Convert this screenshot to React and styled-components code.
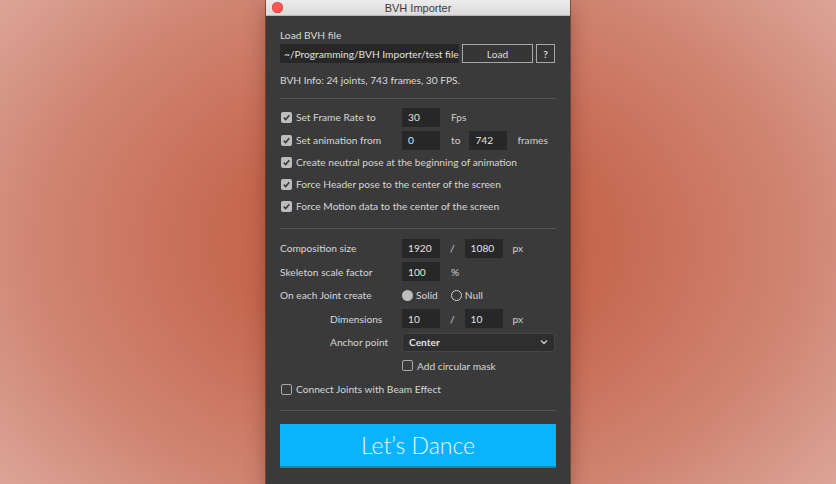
import React from 'react';
import styled, { createGlobalStyle } from 'styled-components';

const GlobalStyle = createGlobalStyle`
  html, body {
    margin: 0;
    padding: 0;
    height: 100%;
  }
  #root {
    height: 100%;
  }
`;

const Page = styled.div`
  width: 836px;
  height: 484px;
  overflow: hidden;
  display: flex;
  justify-content: center;
  background: radial-gradient(
    ellipse 80% 100% at 50% 50%,
    #c25e44 0%,
    #c66850 28%,
    #d08674 58%,
    #e6c1b6 100%
  );
`;

const Window = styled.div`
  width: 304px;
  height: 490px;
  display: flex;
  flex-direction: column;
  background: #3a3a3a;
  box-shadow: 0 0 0 1px rgba(40, 20, 15, 0.45), 0 6px 18px rgba(60, 20, 10, 0.35);
  font-family: Lato, 'Open Sans', sans-serif;
  font-size: 10.2px;
  color: #d6d6d6;
`;

const TitleBar = styled.div`
  height: 15px;
  flex: none;
  position: relative;
  display: flex;
  align-items: center;
  justify-content: center;
  background: linear-gradient(#ececec, #dadada);
  border-bottom: 1px solid #b9b9b9;
  font-family: 'Liberation Sans', Arial, sans-serif;
  font-size: 11px;
  color: #3a3a3a;
`;

const CloseDot = styled.span`
  position: absolute;
  left: 6px;
  top: 2px;
  width: 11px;
  height: 11px;
  border-radius: 50%;
  background: #fc5753;
  box-shadow: inset 0 0 0 0.5px #de3f3a;
`;

const Content = styled.div`
  padding: 0 14px;
  display: flex;
  flex-direction: column;
`;

const Label = styled.div`
  height: 16px;
  display: flex;
  align-items: center;
  margin-top: ${(p) => p.mt || 0}px;
  color: #d8d8d8;
`;

const FileRow = styled.div`
  display: flex;
  height: 19px;
  gap: 3px;
  margin-top: 1px;
`;

const PathField = styled.div`
  width: 179px;
  background: #272727;
  display: flex;
  align-items: center;
  padding-left: 4px;
  box-sizing: border-box;
  white-space: nowrap;
  overflow: hidden;
  color: #e0e0e0;
`;

const OutlineButton = styled.div`
  width: ${(p) => p.w}px;
  box-sizing: border-box;
  border: 1px solid #a7a7a7;
  background: #363636;
  display: flex;
  align-items: center;
  justify-content: center;
  color: #dcdcdc;
  font-weight: ${(p) => (p.bold ? 700 : 400)};
`;

const Divider = styled.hr`
  border: none;
  border-top: 1px solid #555;
  margin: ${(p) => p.mt}px 0 0;
  height: 0;
`;

const Section = styled.div`
  display: flex;
  flex-direction: column;
  margin-top: ${(p) => p.mt}px;
  gap: ${(p) => p.gap || 0}px;
`;

const Row = styled.div`
  height: ${(p) => p.h || 20}px;
  margin-top: ${(p) => p.mt || 0}px;
  display: grid;
  grid-template-columns: 122px 1fr;
  align-items: center;
`;

const RowLabel = styled.div`
  display: flex;
  align-items: center;
  gap: 4px;
  padding-left: ${(p) => (p.indent ? 50 : p.box ? 1 : 0)}px;
  white-space: nowrap;
`;

const Controls = styled.div`
  display: flex;
  align-items: center;
  gap: ${(p) => p.gap ?? 11}px;
`;

const NumField = styled.div`
  width: 38px;
  height: 19px;
  box-sizing: border-box;
  background: #272727;
  display: flex;
  align-items: center;
  padding-left: 6px;
  color: #e2e2e2;
`;

const Unit = styled.span`
  color: #cfcfcf;
  margin-left: ${(p) => p.ml || 0}px;
`;

const Box = styled.span`
  width: 11px;
  height: 11px;
  flex: none;
  box-sizing: border-box;
  border-radius: 2px;
  display: inline-flex;
  align-items: center;
  justify-content: center;
  background: ${(p) => (p.checked ? '#bdbdbd' : 'transparent')};
  border: ${(p) => (p.checked ? 'none' : '1.5px solid #a9a9a9')};
`;

const Check = ({ checked }) => (
  <Box checked={checked}>
    {checked && (
      <svg width="9" height="9" viewBox="0 0 9 9">
        <path d="M1.8 4.6 L3.7 6.5 L7.3 2.3" fill="none" stroke="#3a3a3a" strokeWidth="1.6" />
      </svg>
    )}
  </Box>
);

const Radio = styled.span`
  width: 11px;
  height: 11px;
  box-sizing: border-box;
  border-radius: 50%;
  background: ${(p) => (p.on ? '#bdbdbd' : 'transparent')};
  border: ${(p) => (p.on ? 'none' : '1.5px solid #cfcfcf')};
`;

const RadioOption = styled.span`
  display: flex;
  align-items: center;
  gap: 3px;
  margin-right: ${(p) => p.mr || 0}px;
`;

const Select = styled.div`
  width: 153px;
  height: 19px;
  box-sizing: border-box;
  background: #2e2e2e;
  border: 1px solid #444;
  border-radius: 2px;
  display: flex;
  align-items: center;
  justify-content: space-between;
  padding: 0 6px;
  font-weight: 700;
  color: #e0e0e0;
`;

const DanceButton = styled.div`
  margin-top: 13px;
  height: 42px;
  background: #0ab4fd;
  border-bottom: 2px solid #0a86c0;
  display: flex;
  align-items: center;
  justify-content: center;
  font-family: Lato, 'Open Sans', sans-serif;
  font-weight: 300;
  font-size: 23px;
  color: #eaf8ff;
`;

const Chevron = () => (
  <svg width="8" height="6" viewBox="0 0 8 6">
    <path d="M1 1.5 L4 4.5 L7 1.5" fill="none" stroke="#cfcfcf" strokeWidth="1.3" />
  </svg>
);

export default function App() {
  return (
    <>
      <GlobalStyle />
      <Page>
        <Window>
          <TitleBar>
            <CloseDot />
            BVH Importer
          </TitleBar>
          <Content>
            <Label mt={11}>Load BVH file</Label>
            <FileRow>
              <PathField>~/Programming/BVH Importer/test file</PathField>
              <OutlineButton w={71}>Load</OutlineButton>
              <OutlineButton w={19} bold>?</OutlineButton>
            </FileRow>
            <Label mt={9}>BVH Info: 24 joints, 743 frames, 30 FPS.</Label>
            <Divider mt={10} />

            <Section mt={8}>
              <Row h={20}>
                <RowLabel box><Check checked />Set Frame Rate to</RowLabel>
                <Controls>
                  <NumField>30</NumField>
                  <Unit>Fps</Unit>
                </Controls>
              </Row>
              <Row h={20} mt={3}>
                <RowLabel box><Check checked />Set animation from</RowLabel>
                <Controls gap={9}>
                  <NumField>0</NumField>
                  <Unit ml={2}>to</Unit>
                  <NumField>742</NumField>
                  <Unit ml={1}>frames</Unit>
                </Controls>
              </Row>
              <Row h={22} mt={1}>
                <RowLabel box><Check checked />Create neutral pose at the beginning of animation</RowLabel>
              </Row>
              <Row h={22}>
                <RowLabel box><Check checked />Force Header pose to the center of the screen</RowLabel>
              </Row>
              <Row h={22}>
                <RowLabel box><Check checked />Force Motion data to the center of the screen</RowLabel>
              </Row>
            </Section>
            <Divider mt={11} />

            <Section mt={9} gap={3.5}>
              <Row>
                <RowLabel>Composition size</RowLabel>
                <Controls gap={10}>
                  <NumField>1920</NumField>
                  <Unit>/</Unit>
                  <NumField>1080</NumField>
                  <Unit>px</Unit>
                </Controls>
              </Row>
              <Row>
                <RowLabel>Skeleton scale factor</RowLabel>
                <Controls>
                  <NumField>100</NumField>
                  <Unit>%</Unit>
                </Controls>
              </Row>
              <Row>
                <RowLabel>On each Joint create</RowLabel>
                <Controls gap={0}>
                  <RadioOption mr={13}><Radio on />Solid</RadioOption>
                  <RadioOption><Radio />Null</RadioOption>
                </Controls>
              </Row>
              <Row>
                <RowLabel indent>Dimensions</RowLabel>
                <Controls gap={10}>
                  <NumField>10</NumField>
                  <Unit>/</Unit>
                  <NumField>10</NumField>
                  <Unit>px</Unit>
                </Controls>
              </Row>
              <Row>
                <RowLabel indent>Anchor point</RowLabel>
                <Controls>
                  <Select>
                    Center
                    <Chevron />
                  </Select>
                </Controls>
              </Row>
              <Row>
                <span />
                <RowLabel><Check />Add circular mask</RowLabel>
              </Row>
              <Row>
                <RowLabel box><Check />Connect Joints with Beam Effect</RowLabel>
              </Row>
            </Section>
            <Divider mt={11} />

            <DanceButton>Let’s Dance</DanceButton>
          </Content>
        </Window>
      </Page>
    </>
  );
}
